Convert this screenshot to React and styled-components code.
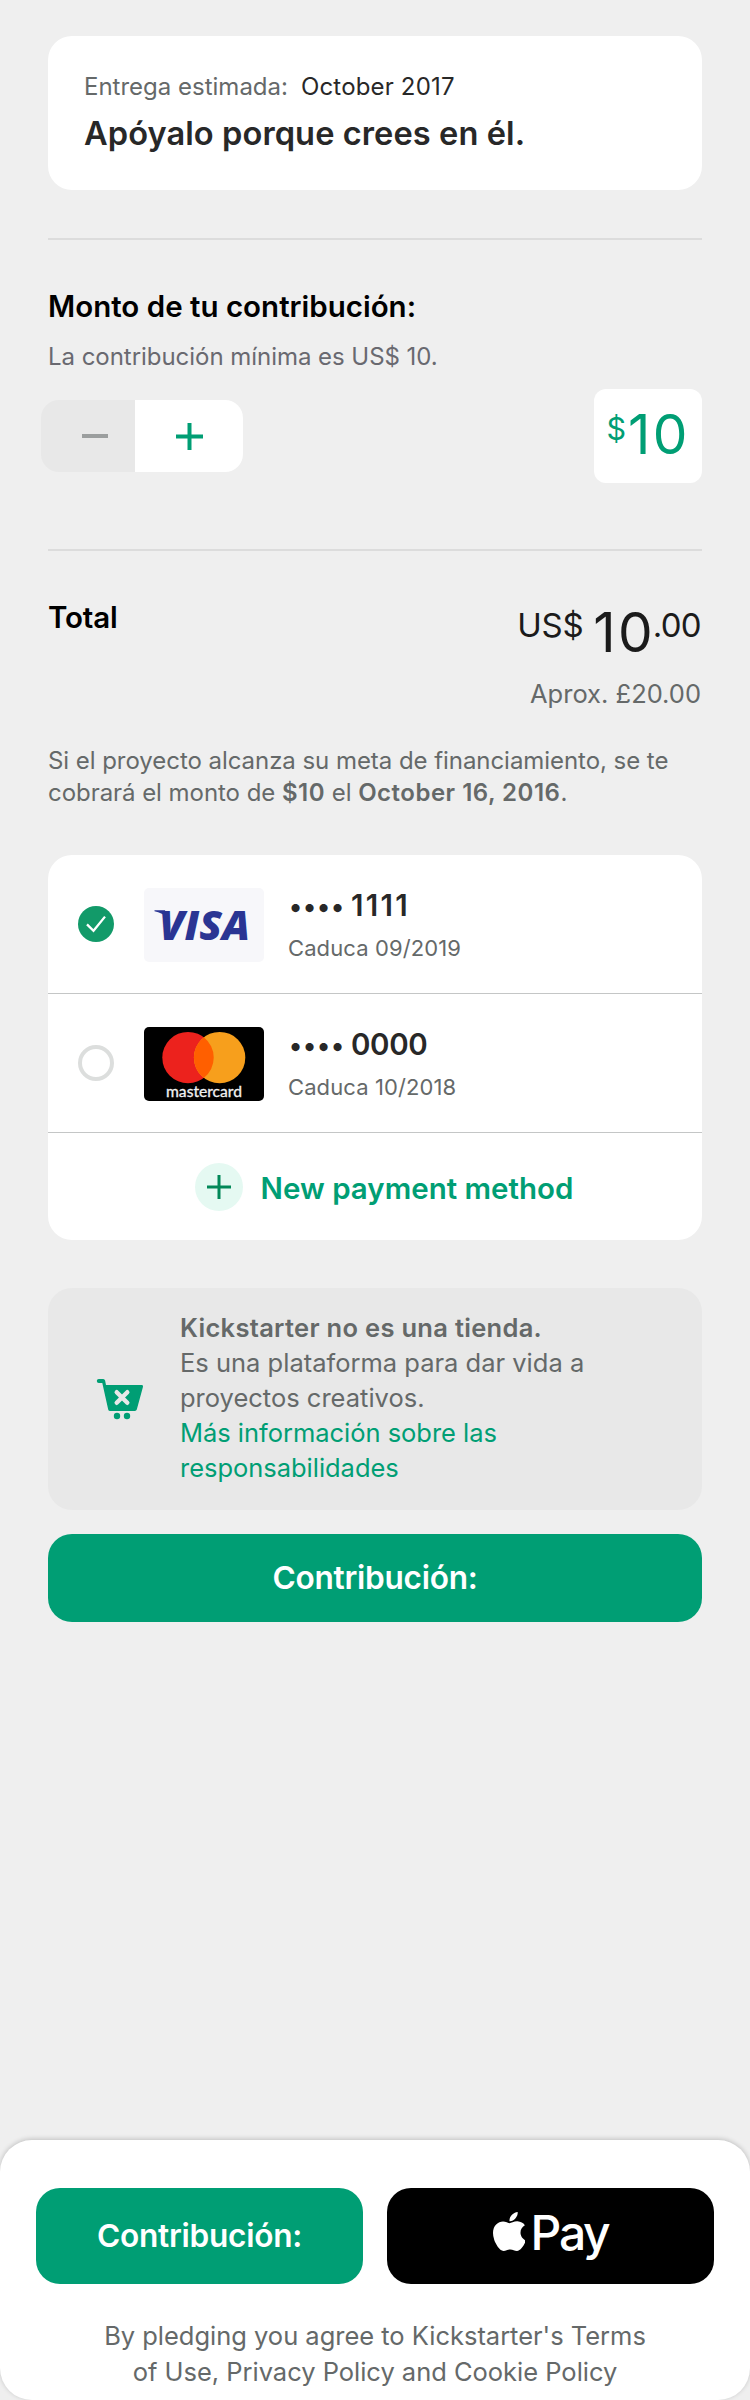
import React from "react";
import styled, { createGlobalStyle } from "styled-components";

const green = "#009e74";
const grey = "#656969";
const ink = "#282828";

const GlobalStyle = createGlobalStyle`
  body {
    margin: 0;
    background: #efefef;
    font-family: Inter, "Liberation Sans", sans-serif;
  }
  *, *::before, *::after { box-sizing: border-box; }
  svg { display: block; flex: none; }
`;

const Page = styled.div`
  display: flex;
  flex-direction: column;
  width: 750px;
  min-height: 2400px;
  background: #efefef;
`;

const Content = styled.main`
  display: flex;
  flex-direction: column;
  padding: 36px 48px 0;
`;

const RewardCard = styled.section`
  height: 154px;
  padding: 35px 36px 0;
  border-radius: 24px;
  background: #fff;
`;

const Delivery = styled.div`
  display: flex;
  gap: 13px;
  font-size: 24px;
  line-height: 31px;
  letter-spacing: 0;
  color: ${grey};
`;

const DeliveryDate = styled.span`
  letter-spacing: 0.17px;
  color: ${ink};
`;

const RewardTitle = styled.h2`
  margin: 11px 0 0;
  font-size: 32.6px;
  font-weight: 600;
  line-height: 40px;
  letter-spacing: 0.08px;
  color: ${ink};
`;

const Divider = styled.hr`
  width: 100%;
  height: 2px;
  margin: ${(p) => p.$above}px 0 48px;
  border: 0;
  background: #dcdcdc;
`;

const Heading = styled.h3`
  margin: 0;
  font-size: 29.5px;
  font-weight: 600;
  line-height: 36px;
  letter-spacing: ${(p) => p.$spacing || 0}px;
  color: #000;
`;

const Hint = styled.p`
  margin: 17px 0;
  font-size: 24px;
  line-height: 31px;
  letter-spacing: -0.04px;
  color: #696970;
`;

const AmountRow = styled.div`
  display: flex;
  align-items: center;
  justify-content: space-between;
  height: 94px;
`;

const Stepper = styled.div`
  display: flex;
  width: 202px;
  height: 72px;
  margin-left: -7px;
  border-radius: 18px;
  overflow: hidden;
`;

const StepButton = styled.button`
  display: flex;
  align-items: center;
  justify-content: center;
  width: ${(p) => (p.disabled ? 94 : 108)}px;
  padding: 0 0 0 ${(p) => (p.disabled ? 14 : 0)}px;
  border: 0;
  background: ${(p) => (p.disabled ? "#e8e8e8" : "#fff")};
  color: ${(p) => (p.disabled ? "#9b9e9e" : green)};
`;

const AmountBox = styled.div`
  display: flex;
  align-items: flex-start;
  width: 108px;
  height: 94px;
  padding: 12px 0 0 12.5px;
  border-radius: 12px;
  background: #fff;
  color: ${green};
`;

const AmountSymbol = styled.span`
  margin: 9px 2px 0 0;
  font-size: 30.5px;
  line-height: 37px;
`;

const BigNumber = styled.span`
  font-size: 55px;
  line-height: 66px;
  letter-spacing: 2.4px;
`;

const TotalRow = styled.div`
  display: flex;
  justify-content: space-between;
  align-items: flex-start;
`;

const TotalColumn = styled.div`
  display: flex;
  flex-direction: column;
  align-items: flex-end;
  padding-right: 1px;
`;

const TotalAmount = styled.div`
  display: flex;
  align-items: flex-start;
  color: #1b1b1b;
`;

const Currency = styled.span`
  margin: 6px 10px 0 0;
  font-size: 33px;
  line-height: 40px;
  letter-spacing: -0.3px;
`;

const Cents = styled.span`
  margin: 6px 0 0 -2.4px;
  font-size: 33px;
  line-height: 40px;
  letter-spacing: -0.7px;
`;

const Approx = styled.div`
  margin-top: 13px;
  font-size: 25.5px;
  line-height: 31px;
  color: ${grey};
`;

const Terms = styled.p`
  margin: 36px 0 46px;
  font-size: 24px;
  line-height: 32px;
  letter-spacing: -0.05px;
  color: ${grey};
  b {
    font-weight: 600;
    letter-spacing: 0.5px;
  }
`;

const PaymentCard = styled.section`
  display: flex;
  flex-direction: column;
  border-radius: 24px;
  background: #fff;
`;

const PaymentRow = styled.div`
  display: flex;
  align-items: center;
  height: 139px;
  padding-left: 30px;
  border-bottom: 1px solid #c4c6c6;
`;

const Radio = styled.span`
  width: 36px;
  height: 36px;
  border: ${(p) => (p.$checked ? 0 : 4)}px solid #dcdedd;
  border-radius: 50%;
  background: ${(p) => (p.$checked ? "#129a69" : "#fff")};
`;

const BrandBadge = styled.div`
  width: 120px;
  height: 74px;
  margin: 2px 24px 0 30px;
  border-radius: 5px;
  overflow: hidden;
  background: ${(p) => (p.$dark ? "#000" : "#f7f7fa")};
`;

const CardInfo = styled.div`
  display: flex;
  flex-direction: column;
  gap: 11px;
  padding-top: 1px;
`;

const CardNumber = styled.div`
  display: flex;
  align-items: baseline;
  height: 36px;
  font-size: 29.5px;
  font-weight: 600;
  line-height: 36px;
  letter-spacing: ${(p) => p.$spacing}px;
  color: ${ink};
`;

const Dots = styled.span`
  margin: 0 6px 0 1px;
  font-size: 26px;
  line-height: 31px;
  letter-spacing: 0.9px;
`;

const Expiry = styled.div`
  font-size: 22px;
  line-height: 28px;
  letter-spacing: 0.1px;
  color: ${grey};
`;

const NewMethod = styled.button`
  display: flex;
  align-items: center;
  justify-content: center;
  gap: 18px;
  height: 107px;
  padding: 1px 0 0 18px;
  border: 0;
  background: none;
  font: 600 29.5px/36px Inter, "Liberation Sans", sans-serif;
  letter-spacing: 0;
  color: ${green};
`;

const NewMethodLabel = styled.span`
  padding-top: 2px;
`;

const PlusCircle = styled.span`
  display: flex;
  align-items: center;
  justify-content: center;
  width: 48px;
  height: 48px;
  border-radius: 50%;
  background: #e5f9f2;
  color: #028858;
`;

const Notice = styled.section`
  display: flex;
  align-items: center;
  gap: 36px;
  height: 222px;
  margin: 48px 0 24px;
  padding-left: 48px;
  border-radius: 24px;
  background: #e8e8e8;
`;

const NoticeText = styled.p`
  margin: 0 0 3px;
  font-size: 25.5px;
  line-height: 35px;
  letter-spacing: 0;
  color: ${grey};
  b {
    font-weight: 600;
    letter-spacing: 0.3px;
  }
`;

const NoticeLink = styled.a`
  letter-spacing: -0.03px;
  color: ${green};
`;

const Button = styled.button`
  display: flex;
  flex: ${(p) => (p.$fill ? 1 : "none")};
  align-items: center;
  justify-content: center;
  height: ${(p) => p.$height}px;
  padding: 0 0 ${(p) => (p.$dark ? 6 : 1)}px;
  border: 0;
  border-radius: 24px;
  background: ${(p) => (p.$dark ? "#000" : green)};
  font: 600 31.6px/39px Inter, "Liberation Sans", sans-serif;
  letter-spacing: -0.26px;
  color: #fff;
`;

const AppleMark = styled.svg`
  margin: 0 6px 3px 0;
`;

const PayWord = styled.span`
  font-size: 48px;
  font-weight: 500;
  line-height: 58px;
  letter-spacing: -2.3px;
`;

const Footer = styled.footer`
  display: flex;
  flex-direction: column;
  height: 260px;
  margin-top: auto;
  padding: 48px 36px 0;
  border-radius: 32px;
  background: #fff;
  box-shadow: 0 -1px 5px rgba(0, 0, 0, 0.2);
`;

const FooterActions = styled.div`
  display: flex;
  gap: 24px;
`;

const Legal = styled.p`
  margin: 34px 0 0;
  font-size: 25.5px;
  line-height: 36px;
  letter-spacing: -0.02px;
  text-align: center;
  color: ${grey};
`;

const LogoText = styled.text`
  font-family: ${(p) => p.$family}, sans-serif;
  font-size: ${(p) => p.$size}px;
  font-weight: ${(p) => p.$weight};
  font-style: ${(p) => (p.$italic ? "italic" : "normal")};
`;

const Plus = ({ size, width }) => (
  <svg width={size} height={size} viewBox={`0 0 ${size} ${size}`} stroke="currentColor" strokeWidth={width}>
    <path d={`M0 ${size / 2}H${size}M${size / 2} 0V${size}`} />
  </svg>
);

const Minus = () => (
  <svg width="26" height="4" viewBox="0 0 26 4">
    <rect width="26" height="4" fill="currentColor" />
  </svg>
);

const Check = () => (
  <svg width="36" height="36" viewBox="0 0 36 36" fill="none" stroke="#fff" strokeWidth="2.3">
    <path d="M9 18.4l6.5 6.4L27 10.6" />
  </svg>
);

const VisaLogo = () => (
  <svg width="120" height="74" viewBox="0 0 120 74" fill="#2a3593">
    <path d="M10.5 22.2H21L24 30.5C20.5 26.5 15.5 24 10.5 23.2z" />
    <LogoText x="15" y="52" textLength="91" lengthAdjust="spacingAndGlyphs" $family='"Open Sans"' $size={41.5} $weight={800} $italic>
      VISA
    </LogoText>
  </svg>
);

const MastercardLogo = () => (
  <svg width="120" height="74" viewBox="0 0 120 74">
    <circle cx="44" cy="30.6" r="25.7" fill="#ec221d" />
    <circle cx="75.6" cy="30.6" r="25.7" fill="#f79f1c" />
    <path d="M59.8 10.3a25.7 25.7 0 0 1 0 40.6a25.7 25.7 0 0 1 0-40.6z" fill="#ff5f00" />
    <LogoText
      x="22"
      y="69.5"
      textLength="76"
      lengthAdjust="spacingAndGlyphs"
      fill="#f2f2f2"
      stroke="#f2f2f2"
      strokeWidth="0.3"
      $family="Lato"
      $size={15.8}
      $weight={400}
    >
      mastercard
    </LogoText>
  </svg>
);

const CartIcon = () => (
  <svg width="48" height="42" viewBox="0 0 48 42" fill={green}>
    <path d="M2.8 1H7.2a2 2 0 0 1 1.9 1.5L10 7H45.6a1.4 1.4 0 0 1 1.4 1.8L40.8 31.6a2 2 0 0 1-1.9 1.4H14.2a2 2 0 0 1-2-1.6L6.3 5H2.8a2 2 0 0 1 0-4z" />
    <circle cx="21" cy="38" r="3.2" />
    <circle cx="31" cy="38" r="3.2" />
    <path d="M20.7 14.2l10.6 10.6M31.3 14.2L20.7 24.8" stroke="#e8e8e8" strokeWidth="4.4" strokeLinecap="round" />
  </svg>
);

const AppleIcon = () => (
  <AppleMark width="32" height="39" viewBox="4 32 366 448" preserveAspectRatio="none" fill="#fff">
    <path d="M318.7 268.7c-.2-36.7 16.4-64.4 50-84.8-18.8-26.9-47.2-41.7-84.7-44.6-35.5-2.8-74.3 20.7-88.5 20.7-15 0-49.4-19.7-76.4-19.7C63.3 141.2 4 184.8 4 273.5q0 39.3 14.4 81.2c12.8 36.7 59 126.7 107.2 125.2 25.2-.6 43-17.9 75.8-17.9 31.8 0 48.3 17.9 76.4 17.9 48.6-.7 90.4-82.5 102.6-119.3-65.2-30.7-61.7-90-61.7-91.9zm-56.6-164.2c27.3-32.4 24.8-61.9 24-72.5-24.1 1.4-52 16.4-67.9 34.9-17.5 19.8-27.8 44.3-25.6 71.9 26.1 2 49.9-11.4 69.5-34.3z" />
  </AppleMark>
);

export default function App() {
  return (
    <>
      <GlobalStyle />
      <Page>
        <Content>
          <RewardCard>
            <Delivery>
              <span>Entrega estimada:</span>
              <DeliveryDate>October 2017</DeliveryDate>
            </Delivery>
            <RewardTitle>Apóyalo porque crees en él.</RewardTitle>
          </RewardCard>

          <Divider $above={48} />

          <Heading>Monto de tu contribución:</Heading>
          <Hint>La contribución mínima es US$ 10.</Hint>
          <AmountRow>
            <Stepper>
              <StepButton disabled aria-label="Menos">
                <Minus />
              </StepButton>
              <StepButton aria-label="Más">
                <Plus size={27} width={4} />
              </StepButton>
            </Stepper>
            <AmountBox>
              <AmountSymbol>$</AmountSymbol>
              <BigNumber>10</BigNumber>
            </AmountBox>
          </AmountRow>

          <Divider $above={66} />

          <TotalRow>
            <Heading $spacing={-0.15}>Total</Heading>
            <TotalColumn>
              <TotalAmount>
                <Currency>US$</Currency>
                <BigNumber>10</BigNumber>
                <Cents>.00</Cents>
              </TotalAmount>
              <Approx>Aprox. £20.00</Approx>
            </TotalColumn>
          </TotalRow>

          <Terms>
            Si el proyecto alcanza su meta de financiamiento, se te
            <br />
            cobrará el monto de <b>$10</b> el <b>October 16, 2016</b>.
          </Terms>

          <PaymentCard>
            <PaymentRow>
              <Radio $checked>
                <Check />
              </Radio>
              <BrandBadge>
                <VisaLogo />
              </BrandBadge>
              <CardInfo>
                <CardNumber $spacing={2.3}>
                  <Dots>••••</Dots>1111
                </CardNumber>
                <Expiry>Caduca 09/2019</Expiry>
              </CardInfo>
            </PaymentRow>
            <PaymentRow>
              <Radio />
              <BrandBadge $dark>
                <MastercardLogo />
              </BrandBadge>
              <CardInfo>
                <CardNumber $spacing={-0.37}>
                  <Dots>••••</Dots>0000
                </CardNumber>
                <Expiry>Caduca 10/2018</Expiry>
              </CardInfo>
            </PaymentRow>
            <NewMethod>
              <PlusCircle>
                <Plus size={24} width={3} />
              </PlusCircle>
              <NewMethodLabel>New payment method</NewMethodLabel>
            </NewMethod>
          </PaymentCard>

          <Notice>
            <CartIcon />
            <NoticeText>
              <b>Kickstarter no es una tienda.</b>
              <br />
              Es una plataforma para dar vida a
              <br />
              proyectos creativos.
              <br />
              <NoticeLink>
                Más información sobre las
                <br />
                responsabilidades
              </NoticeLink>
            </NoticeText>
          </Notice>

          <Button $height={88}>Contribución:</Button>
        </Content>

        <Footer>
          <FooterActions>
            <Button $fill $height={96}>
              Contribución:
            </Button>
            <Button $fill $dark $height={96}>
              <AppleIcon />
              <PayWord>Pay</PayWord>
            </Button>
          </FooterActions>
          <Legal>
            By pledging you agree to Kickstarter's Terms
            <br />
            of Use, Privacy Policy and Cookie Policy
          </Legal>
        </Footer>
      </Page>
    </>
  );
}
